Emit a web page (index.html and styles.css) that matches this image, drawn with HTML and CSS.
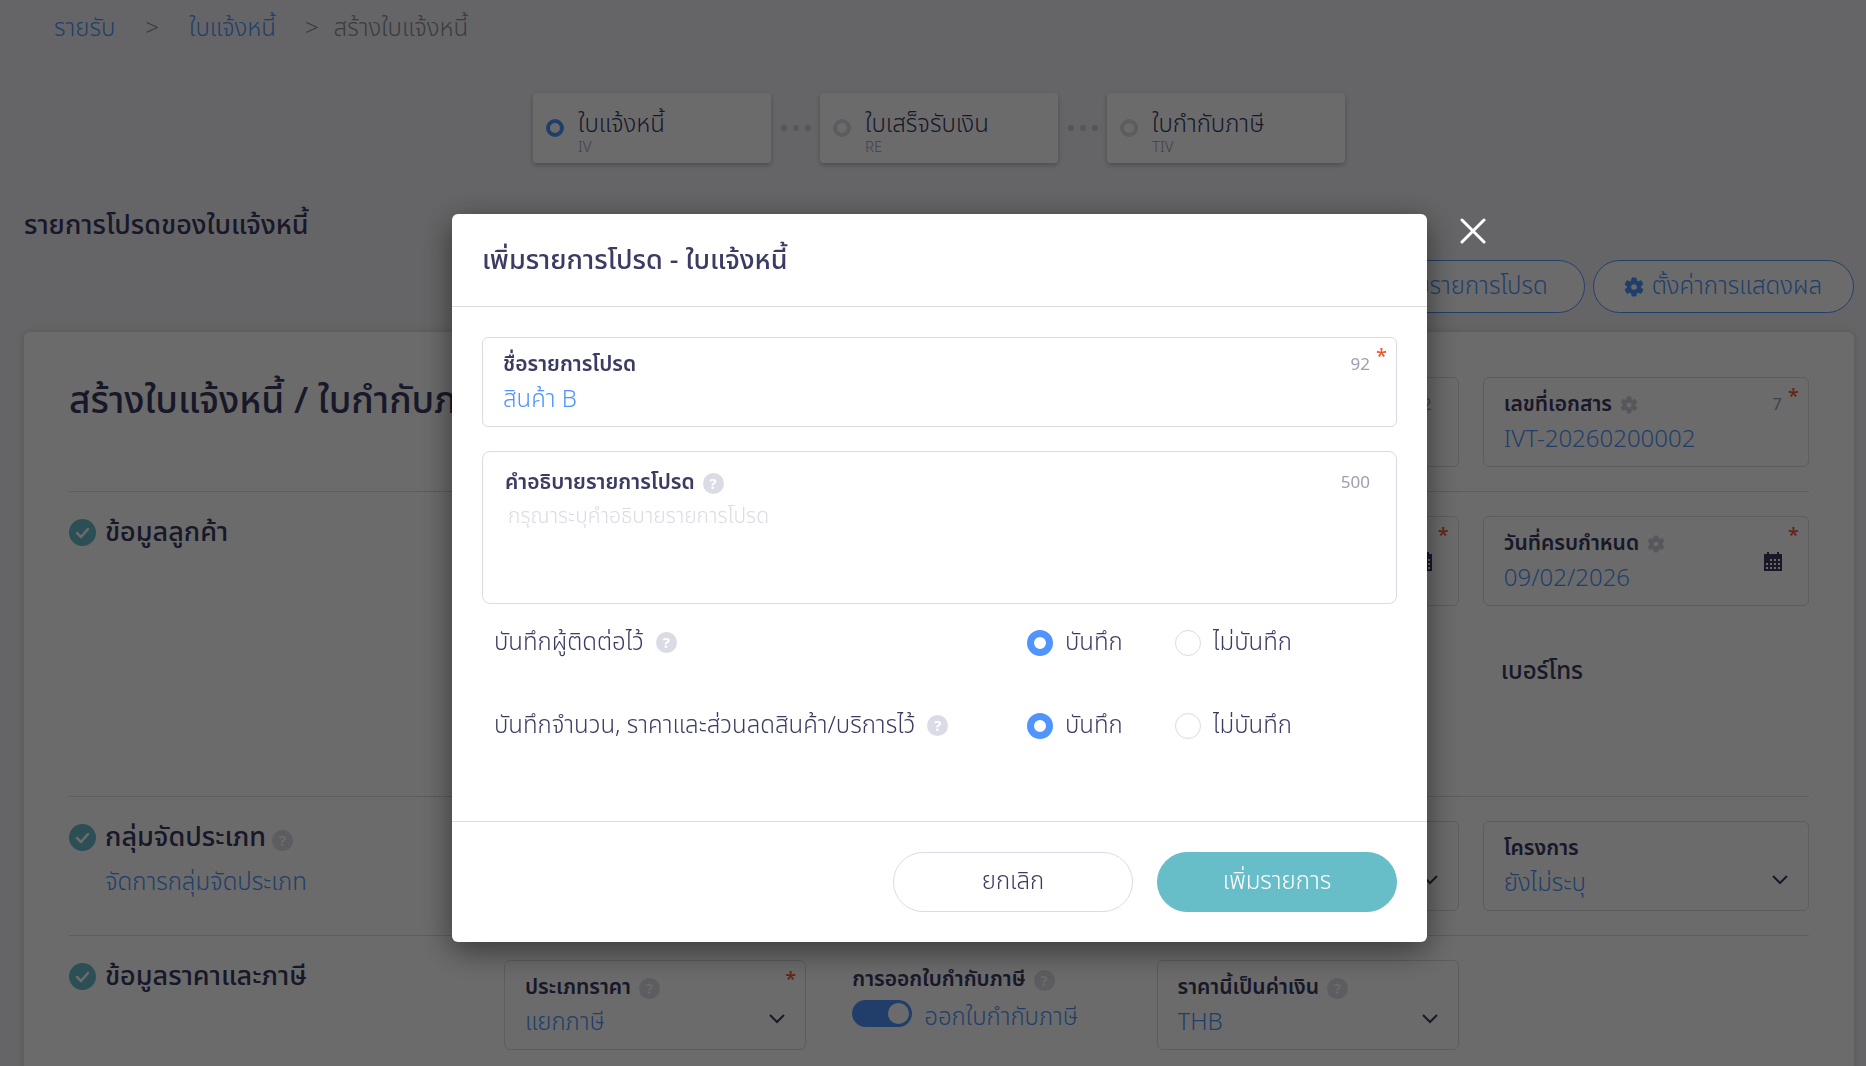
FILE: index.html
```html
<!DOCTYPE html>
<html lang="th">
<head>
<meta charset="utf-8">
<meta name="viewport" content="width=device-width, initial-scale=1">
<title>สร้างใบแจ้งหนี้</title>
<link rel="stylesheet" href="styles.css">
</head>
<body>
<svg class="sprite" aria-hidden="true">
  <symbol id="gear" viewBox="1 0 18 18"><path fill="currentColor" stroke="currentColor" stroke-linejoin="round" fill-rule="evenodd" d="M8.300 1h3.400l.5 2.500 1.500.9 2.500-.9 1.700 3-2 1.700v1.600l2 1.700-1.700 3-2.500-.9-1.500.9-.5 2.500H8.300l-.5-2.500-1.500-.9-2.500.9-1.700-3 2-1.700V8.200l-2-1.700 1.700-3 2.500.9 1.500-.9zM10 6a3 3 0 1 0 0 6 3 3 0 0 0 0-6z"/></symbol>
  <symbol id="check" viewBox="0 0 27 27"><circle cx="13.500" cy="13.500" r="13.500" fill="#67bdc8"/><path d="M8 14l4 4 7-8" fill="none" stroke="#fff" stroke-width="2.500" stroke-linecap="round" stroke-linejoin="round"/></symbol>
  <symbol id="chevron" viewBox="0 0 16 10"><path d="M1 1l7 7 7-7" fill="none" stroke="currentColor" stroke-width="2"/></symbol>
  <symbol id="calendar" viewBox="0 0 18 20"><path fill="currentColor" d="M3 0h2v2H3zM13 0h2v2h-2zM0 2h18v17H0z"/><path fill="#fff" d="M6 7h2v2H6zM10 7h2v2h-2zM14 7h2v2h-2zM2 11h2v2H2zM6 11h2v2H6zM10 11h2v2h-2zM14 11h2v2h-2zM2 15h2v2H2zM6 15h2v2H6zM10 15h2v2h-2zM14 15h2v2h-2z"/></symbol>
</svg>

<div class="page">
  <nav class="crumbs" aria-label="เส้นทาง">
    <a href="#">รายรับ</a><span class="sep">&gt;</span><a href="#">ใบแจ้งหนี้</a><span class="sep sep-last">&gt;</span><span class="current">สร้างใบแจ้งหนี้</span>
  </nav>

  <ol class="steps">
    <li class="step active"><span class="ring"></span><span class="step-text"><span class="step-name">ใบแจ้งหนี้</span><span class="step-code">IV</span></span></li>
    <li class="dots"><i></i><i></i><i></i></li>
    <li class="step"><span class="ring"></span><span class="step-text"><span class="step-name">ใบเสร็จรับเงิน</span><span class="step-code">RE</span></span></li>
    <li class="dots"><i></i><i></i><i></i></li>
    <li class="step"><span class="ring"></span><span class="step-text"><span class="step-name">ใบกำกับภาษี</span><span class="step-code">TIV</span></span></li>
  </ol>

  <h2 class="favorites-title">รายการโปรดของใบแจ้งหนี้</h2>
  <div class="actions">
    <button type="button" class="outline wide">เพิ่มรายการโปรด</button>
    <button type="button" class="outline"><svg class="gear-icon"><use href="#gear"/></svg>ตั้งค่าการแสดงผล</button>
  </div>

  <main class="card">
    <section class="section">
      <h1>สร้างใบแจ้งหนี้ / ใบกำกับภาษี</h1>
      <div class="field at-4"><div class="label-row"><label for="doc-name">ชื่อเอกสาร</label><span class="count">92</span></div><input id="doc-name" type="text"></div>
      <div class="field last">
        <div class="label-row"><label for="doc-no">เลขที่เอกสาร</label><svg class="gear-icon muted"><use href="#gear"/></svg><span class="count">7</span></div>
        <input id="doc-no" type="text" value="IVT-20260200002"><span class="star">*</span>
      </div>
    </section>

    <section class="section customer">
      <h3 class="section-title"><svg class="check"><use href="#check"/></svg>ข้อมูลลูกค้า</h3>
      <div class="field at-4"><div class="label-row"><label for="issue">วันที่ออก</label></div><input id="issue" type="text" value="09/02/2026"><span class="star">*</span><svg class="calendar"><use href="#calendar"/></svg></div>
      <div class="field last">
        <div class="label-row"><label for="due">วันที่ครบกำหนด</label><svg class="gear-icon muted"><use href="#gear"/></svg></div>
        <input id="due" type="text" value="09/02/2026"><span class="star">*</span><svg class="calendar"><use href="#calendar"/></svg>
      </div>
      <h4 class="phone">เบอร์โทร</h4>
    </section>

    <section class="section">
      <div>
        <h3 class="section-title"><svg class="check"><use href="#check"/></svg>กลุ่มจัดประเภท<span class="help">?</span></h3>
        <a class="manage" href="#">จัดการกลุ่มจัดประเภท</a>
      </div>
      <div class="field at-4"><div class="label-row"><label for="dept">แผนก</label></div><select id="dept"><option>ยังไม่ระบุ</option></select><svg class="chevron"><use href="#chevron"/></svg></div>
      <div class="field last"><div class="label-row"><label for="project">โครงการ</label></div><select id="project"><option>ยังไม่ระบุ</option></select><svg class="chevron"><use href="#chevron"/></svg></div>
    </section>

    <section class="section">
      <h3 class="section-title"><svg class="check"><use href="#check"/></svg>ข้อมูลราคาและภาษี</h3>
      <div class="field"><div class="label-row"><label for="price">ประเภทราคา</label><span class="help">?</span></div><select id="price"><option>แยกภาษี</option></select><span class="star">*</span><svg class="chevron"><use href="#chevron"/></svg></div>
      <div class="tax">
        <div class="label-row"><label for="tax">การออกใบกำกับภาษี</label><span class="help">?</span></div>
        <div class="switch-row"><input id="tax" class="switch" type="checkbox" role="switch" checked><span>ออกใบกำกับภาษี</span></div>
      </div>
      <div class="field"><div class="label-row"><label for="currency">ราคานี้เป็นค่าเงิน</label><span class="help">?</span></div><select id="currency"><option>THB</option></select><svg class="chevron"><use href="#chevron"/></svg></div>
    </section>
  </main>
</div>

<div class="overlay">
  <form class="modal" role="dialog" aria-modal="true" aria-labelledby="modal-title">
    <header><h2 id="modal-title">เพิ่มรายการโปรด - ใบแจ้งหนี้</h2></header>
    <div class="modal-body">
      <div class="field"><div class="label-row"><label for="fav-name">ชื่อรายการโปรด</label><span class="count">92</span></div><input id="fav-name" type="text" value="สินค้า B"><span class="star">*</span></div>
      <div class="field area"><div class="label-row"><label for="fav-desc">คำอธิบายรายการโปรด</label><span class="help">?</span><span class="count">500</span></div><textarea id="fav-desc" placeholder="กรุณาระบุคำอธิบายรายการโปรด"></textarea></div>
      <div class="choices" role="radiogroup" aria-labelledby="contact-label">
        <div class="choice-label"><span id="contact-label">บันทึกผู้ติดต่อไว้</span><span class="help">?</span></div>
        <label class="radio"><input type="radio" name="contact" checked>บันทึก</label>
        <label class="radio"><input type="radio" name="contact">ไม่บันทึก</label>
      </div>
      <div class="choices" role="radiogroup" aria-labelledby="items-label">
        <div class="choice-label"><span id="items-label">บันทึกจำนวน, ราคาและส่วนลดสินค้า/บริการไว้</span><span class="help">?</span></div>
        <label class="radio"><input type="radio" name="items" checked>บันทึก</label>
        <label class="radio"><input type="radio" name="items">ไม่บันทึก</label>
      </div>
    </div>
    <footer>
      <button type="button" class="pill">ยกเลิก</button>
      <button type="submit" class="pill primary">เพิ่มรายการ</button>
    </footer>
    <button type="button" class="close" aria-label="ปิด"><svg viewBox="0 0 26 26"><path d="M2 2l22 22M24 2L2 24" stroke="#fff" stroke-width="3" stroke-linecap="round"/></svg></button>
  </form>
</div>
</body>
</html>
```
FILE: styles.css
```css
:root {
  --ink: #3b3b63;
  --blue: #5095fd;
  --line: #dbdbe6;
  --muted: #9d9db3;
  --teal: #67bdc8;
}
* { box-sizing: border-box; }
body {
  margin: 0;
  background: #f1f1f5;
  color: var(--ink);
  font: 300 24px/32px "Noto Sans Thai", "Noto Sans", sans-serif;
}
h1, h2, h3, h4, ol { margin: 0; padding: 0; }
a { color: var(--blue); text-decoration: none; }
button, input, select, textarea { font: inherit; color: inherit; }
.sprite { display: none; }

.page { height: 100vh; overflow: hidden; padding: 0 12px 0 24px; }
.crumbs { display: flex; align-items: center; height: 56px; padding: 2px 0 0 30px; }
.sep { color: #8d8d9a; margin: 0 30px; }
.sep-last { margin: 0 15px 0 29px; }
.current { color: #8d8d9a; }

.steps { display: flex; justify-content: center; list-style: none; margin-top: 37px; }
.step {
  display: flex; align-items: center; gap: 14px;
  width: 238px; height: 70px; padding: 0 13px;
  background: #fff; border-radius: 4px; box-shadow: 0 2px 5px rgba(0,0,0,.25);
}
.ring { width: 18px; height: 18px; border: 4px solid var(--line); border-radius: 50%; }
.active .ring { border-color: var(--blue); }
.step-text { display: flex; flex-direction: column; padding-top: 8px; }
.step-name { line-height: 32px; }
.step-code { font-size: 15px; line-height: 14px; color: var(--muted); }
.dots { display: flex; align-items: center; justify-content: center; gap: 6px; width: 49px; }
.dots i { width: 6px; height: 6px; border-radius: 50%; background: #cdcdd2; }

.favorites-title { margin-top: 45px; font-size: 27px; line-height: 36px; font-weight: 500; }
.actions { display: flex; justify-content: flex-end; gap: 8px; margin-top: 16px; }
.outline {
  display: flex; align-items: center; gap: 8px;
  height: 53px; padding: 0 31px 0 30px;
  border: 1px solid var(--blue); border-radius: 27px; background: #fff; color: var(--blue);
}
.wide { padding: 0 36px; }
.gear-icon { width: 20px; height: 20px; }
.muted { color: #cfcfd9; margin-left: 8px; width: 18px; height: 18px; }

.card {
  margin-top: 19px; padding: 21px 45px;
  background: #fff; border-radius: 6px; box-shadow: 0 0 8px rgba(0,0,0,.15);
}
.section {
  display: grid; grid-template-columns: minmax(0, 4fr) repeat(4, minmax(0, 3fr)); align-items: start;
  padding: 24px 0; border-bottom: 1px solid var(--line);
}
.section:last-child { border: 0; }
.customer { min-height: 305px; grid-template-rows: 90px auto; }
h1 { font-size: 37px; line-height: 50px; font-weight: 500; white-space: nowrap; grid-column: 1; }
.section-title { display: flex; align-items: center; gap: 9px; height: 33px; font-size: 27px; font-weight: 500; }
.section-title .help { margin: 6px 0 0 -3px; }
.check { width: 27px; height: 27px; }
.manage { display: block; margin: 13px 0 0 36px; }
.phone { grid-column: 5; padding: 50px 0 0 18px; font-size: 24px; font-weight: 500; }

.field {
  position: relative; min-height: 90px; margin-right: 24px; padding: 10px 20px 8px;
  border: 1px solid var(--line); border-radius: 6px; background: #fff;
}
.field.last, .modal .field { margin-right: 0; }
.at-4 { grid-column: 4; }
.last { grid-column: 5; }
.label-row { display: flex; align-items: center; height: 34px; font-size: 21px; font-weight: 600; }
.label-row .help { margin-left: 8px; }
.field input, .field select, .field textarea {
  display: block; width: 100%; height: 36px; padding: 0; border: 0; outline: 0;
  background: transparent; color: var(--blue); appearance: none; font-size: 24px; line-height: 36px;
}
.count { margin-left: auto; padding-right: 6px; font-size: 17px; font-weight: 400; color: var(--muted); }
.star { position: absolute; top: 7px; right: 9px; font-size: 20px; line-height: 24px; font-weight: 500; color: #f0562f; }
.calendar { position: absolute; top: 35px; right: 26px; width: 18px; height: 20px; }
.chevron { position: absolute; top: 53px; right: 20px; width: 16px; height: 10px; }
.help {
  display: inline-flex; align-items: center; justify-content: center;
  width: 21px; height: 21px; border-radius: 50%; background: var(--line);
  color: #fff; font: 700 15px/21px "Noto Sans", sans-serif;
}
.tax { padding: 3px 0 0 22px; }
.switch-row { display: flex; align-items: flex-start; gap: 12px; padding-top: 3px; color: var(--blue); }
.switch-row span { line-height: 36px; }
.switch {
  appearance: none; display: flex; justify-content: flex-end; align-items: center;
  width: 60px; height: 27px; margin: 0; padding: 3px; border-radius: 14px; background: var(--blue);
}
.switch::before { content: ""; width: 21px; height: 21px; border-radius: 50%; background: #fff; }

.overlay {
  position: fixed; inset: 0; padding: 214px 0 0 13px;
  display: flex; justify-content: center; align-items: flex-start; background: rgba(0,0,0,.58);
}
.modal {
  position: relative; width: 975px; max-width: 90%;
  background: #fff; border-radius: 6px; box-shadow: 0 8px 32px rgba(0,0,0,.5);
}
.modal header { padding: 29px 30px 27px; border-bottom: 1px solid var(--line); }
.modal h2 { font-size: 27px; line-height: 36px; font-weight: 500; }
.modal-body { padding: 30px 30px 0; height: 514px; }
.area { margin-top: 24px; height: 153px; border-radius: 8px; padding: 14px 20px 0 22px; }
.modal .area textarea { height: 90px; padding-left: 3px; resize: none; font-size: 21px; line-height: 34px; }
textarea::placeholder { color: var(--line); opacity: 1; }
.choices { display: grid; grid-template-columns: 533px 148px auto; align-items: center; height: 83px; padding-left: 12px; }
.area + .choices { margin-top: -3px; }
.choice-label { display: flex; align-items: center; gap: 12px; }
.radio { display: flex; align-items: center; gap: 12px; }
.radio input { appearance: none; width: 26px; height: 26px; margin: 0; border: 1px solid var(--line); border-radius: 50%; }
.radio input:checked { border: 7px solid var(--blue); }
.modal footer { display: flex; justify-content: flex-end; gap: 24px; padding: 30px; border-top: 1px solid var(--line); }
.pill { width: 240px; height: 60px; border: 1px solid var(--line); border-radius: 30px; background: #fff; }
.primary { background: var(--teal); border-color: var(--teal); color: #fff; }
.close { position: absolute; top: 3px; right: -60px; width: 28px; height: 28px; padding: 1px; border: 0; background: none; }
.close svg { display: block; width: 26px; height: 26px; }
```
